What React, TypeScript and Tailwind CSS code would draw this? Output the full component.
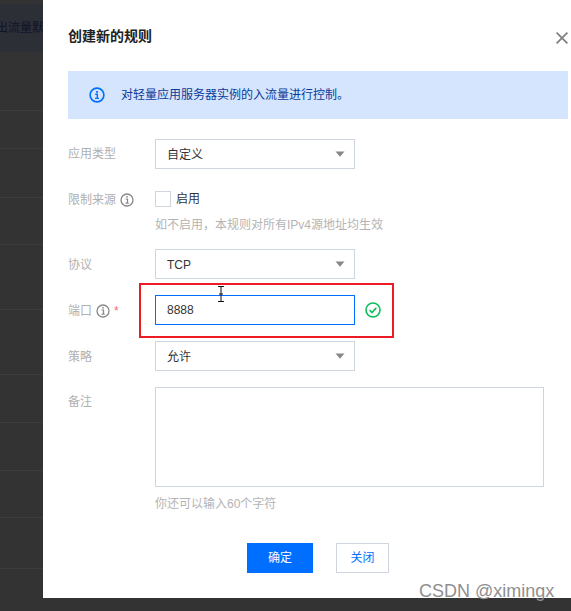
const font = { fontFamily: '"Liberation Sans", "Noto Sans CJK SC", sans-serif' };

const stripRows = [59, 38, 49, 47, 65, 65, 48, 48, 47, 51];

function InfoIcon() {
  return (
    <svg width="14" height="14" viewBox="0 0 14 14" className="shrink-0" fill="none">
      <circle cx="7" cy="7" r="6" stroke="#888" strokeWidth="1.3" />
      <rect x="6.3" y="3" width="1.5" height="1.5" fill="#888" />
      <path d="M5.5 6h2v4M5.5 10.2h3.2" stroke="#888" strokeWidth="1.2" />
    </svg>
  );
}

function Caret() {
  return (
    <svg width="10" height="6" viewBox="0 0 10 6" className="shrink-0">
      <path d="M0.5 0.5h9L5 5.8z" fill="#888" />
    </svg>
  );
}

function Select({ value }: { value: string }) {
  return (
    <div className="flex h-[30px] w-[200px] items-center justify-between border border-[#cfd5de] pl-[11px] pr-[9px] text-[12px] text-[#333]">
      <span className="pt-[2px]">{value}</span>
      <Caret />
    </div>
  );
}

function Label({ children, className = "" }: { children: React.ReactNode; className?: string }) {
  return (
    <div className={`flex h-[16px] w-[87px] shrink-0 items-center gap-[4px] text-[12px] text-[#b0b0b0] ${className}`}>
      {children}
    </div>
  );
}

export default function App() {
  return (
    <div className="relative flex h-[611px] w-[571px] overflow-hidden bg-[#333333]" style={font}>
      <div className="w-[43px] shrink-0 pt-[4px]">
        <div className="flex h-[48px] items-center overflow-hidden whitespace-nowrap bg-[#2c2f36] text-[12px] text-[#10142a]">
          <span className="ml-[-4px]">出流量默认</span>
        </div>
        {stripRows.map((h, i) => (
          <div key={i} className="border-b border-[#3d3d3d]" style={{ height: h }} />
        ))}
      </div>

      <div className="relative h-[598px] flex-1 bg-white pl-[25px] pr-[3px]">
        <h2 className="pt-[28px] text-[14px] font-bold leading-[16px] text-[#222]">创建新的规则</h2>
        <button className="absolute right-[3px] top-[32px]">
          <svg width="12" height="12" viewBox="0 0 12 12" fill="none" className="block">
            <path d="M0.6 0.6l10.8 10.8M11.4 0.6L0.6 11.4" stroke="#808080" strokeWidth="1.8" />
          </svg>
        </button>

        <div className="mt-[27px] flex h-[48px] items-center bg-[#d4e5fd] pl-[21px] text-[12px] text-[#0a3a9a]">
          <svg width="16" height="16" viewBox="0 0 16 16" fill="none" className="mr-[16px] shrink-0">
            <circle cx="8" cy="8" r="6.9" stroke="#006eff" strokeWidth="1.6" />
            <rect x="7.1" y="4" width="1.8" height="1.8" fill="#006eff" />
            <path d="M6.3 7.2h2v4M6 11.4h4" stroke="#006eff" strokeWidth="1.4" />
          </svg>
          对轻量应用服务器实例的入流量进行控制。
        </div>

        <div className="mt-[20px] flex items-center">
          <Label>应用类型</Label>
          <Select value="自定义" />
        </div>

        <div className="mt-[22px] flex">
          <Label className="mt-px">
            限制来源 <InfoIcon />
          </Label>
          <div>
            <div className="flex h-[17px] items-start gap-[5px] text-[12px] leading-[16px] text-[#333]">
              <span className="h-[16px] w-[16px] border border-[#cfd5de]" />
              <span>启用</span>
            </div>
            <p className="mt-[9px] text-[12px] leading-[16px] text-[#b4b4b4]">如不启用{"\uFF0C"}本规则对所有IPv4源地址均生效</p>
          </div>
        </div>

        <div className="mt-[16px] flex items-center">
          <Label className="mt-[2px]">协议</Label>
          <Select value="TCP" />
        </div>

        <div className="mt-[16px] flex items-center">
          <Label className="mt-[2px]">
            端口 <InfoIcon /> <span className="text-[#f06a6a]">*</span>
          </Label>
          <input
            readOnly
            value="8888"
            className="h-[30px] w-[200px] border border-[#006eff] pl-[11px] text-[12px] text-[#333] outline-none"
          />
          <svg width="16" height="16" viewBox="0 0 16 16" fill="none" className="ml-[10px]">
            <circle cx="8" cy="8" r="7" stroke="#0abf5b" strokeWidth="1.6" />
            <path d="M4.6 8.2l2.4 2.3 4.3-4.6" stroke="#0abf5b" strokeWidth="1.6" />
          </svg>
        </div>

        <div className="mt-[16px] flex items-center">
          <Label className="mt-[2px]">策略</Label>
          <Select value="允许" />
        </div>

        <div className="mt-[16px] flex">
          <div className="w-[87px] shrink-0 pt-[7px] text-[12px] leading-[16px] text-[#b0b0b0]">备注</div>
          <div>
            <div className="h-[100px] w-[389px] border border-[#cfd5de]" />
            <p className="mt-[9px] text-[12px] leading-[16px] text-[#b4b4b4]">你还可以输入60个字符</p>
          </div>
        </div>

        <div className="mt-[31px] flex pl-[179px]">
          <button className="h-[30px] w-[66px] bg-[#006eff] text-[12px] text-white">确定</button>
          <button className="ml-[23px] h-[30px] w-[53px] border border-[#cfd5de] text-[12px] text-[#006eff]">关闭</button>
        </div>
      </div>

      {/* annotation on top of the screenshot */}
      <div className="absolute left-[139px] top-[283px] h-[55px] w-[255px] border-2 border-[#ed1c24]" />
      <svg width="8" height="16" viewBox="0 0 8 16" fill="none" className="absolute left-[217px] top-[286px]">
        <path d="M1 .5h6M4 .5v15M1 15.5h6M2 8h4" stroke="#111" strokeWidth="1" />
      </svg>
      <span className="absolute left-[419px] top-[581px] text-[18px] leading-[20px] text-[#8f8f8f]">CSDN @ximingx</span>
    </div>
  );
}
